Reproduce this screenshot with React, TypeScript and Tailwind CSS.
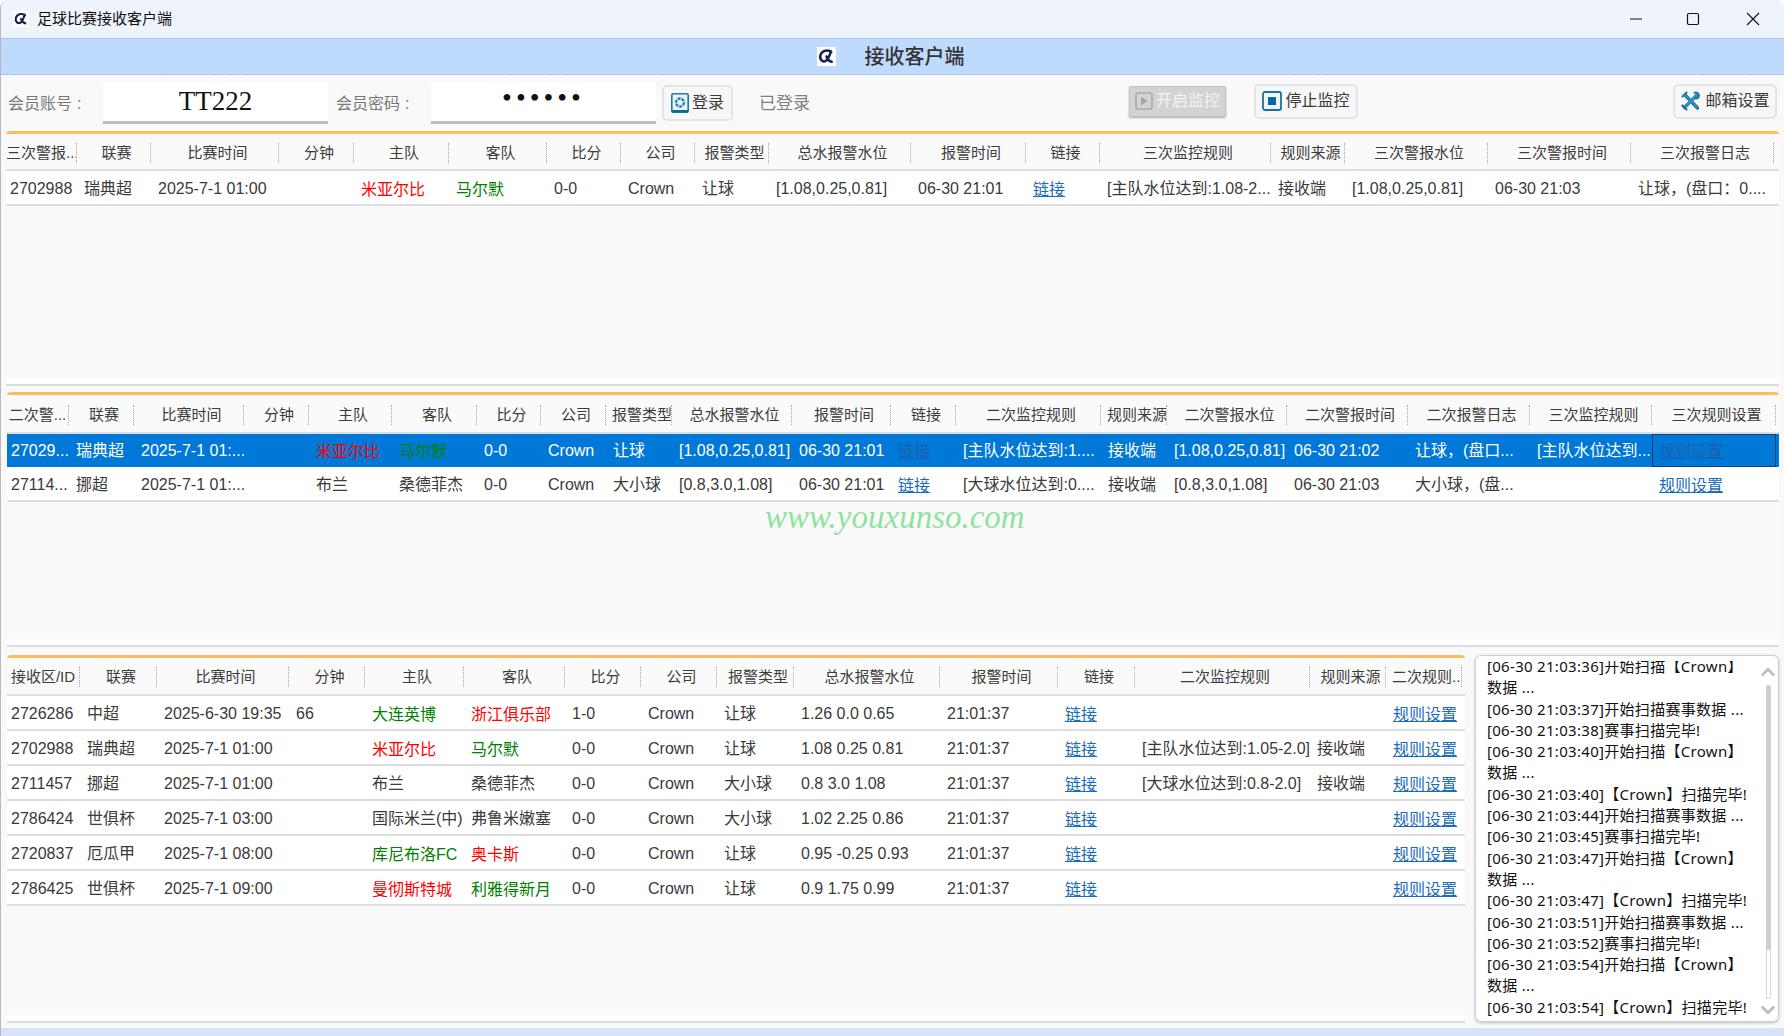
import { ChevronDown, ChevronUp } from "lucide-react";
import { ReactNode } from "react";

type Cell = string | { t: string; c?: "red" | "green" | "link"; wrap?: boolean };

const RED = (t: string, wrap?: boolean): Cell => ({ t, c: "red", wrap });
const GREEN = (t: string): Cell => ({ t, c: "green" });
const LINK = (t: string): Cell => ({ t, c: "link" });

const cols1 = "grid grid-cols-[71px_74px_128px_75px_95px_98px_74px_74px_74px_142px_115px_74px_171px_74px_143px_143px_143px]";
const cols2 = "grid grid-cols-[62px_65px_110px_65px_83px_85px_64px_65px_66px_120px_99px_65px_145px_66px_120px_121px_122px_122px_124px]";
const cols3 = "grid grid-cols-[73px_77px_132px_76px_99px_101px_76px_76px_77px_146px_118px_77px_175px_76px_76px]";

const head1 = ["三次警报...", "联赛", "比赛时间", "分钟", "主队", "客队", "比分", "公司", "报警类型", "总水报警水位", "报警时间", "链接", "三次监控规则", "规则来源", "三次警报水位", "三次警报时间", "三次报警日志"];
const head2 = ["二次警...", "联赛", "比赛时间", "分钟", "主队", "客队", "比分", "公司", "报警类型", "总水报警水位", "报警时间", "链接", "二次监控规则", "规则来源", "二次警报水位", "二次警报时间", "二次报警日志", "三次监控规则", "三次规则设置"];
const head3 = ["接收区/ID", "联赛", "比赛时间", "分钟", "主队", "客队", "比分", "公司", "报警类型", "总水报警水位", "报警时间", "链接", "二次监控规则", "规则来源", "二次规则..."];

const rows1: Cell[][] = [
  ["2702988", "瑞典超", "2025-7-1 01:00", "", RED("米亚尔比"), GREEN("马尔默"), "0-0", "Crown", "让球", "[1.08,0.25,0.81]", "06-30 21:01", LINK("链接"), "[主队水位达到:1.08-2...", "接收端", "[1.08,0.25,0.81]", "06-30 21:03", "让球，(盘口：0...."],
];

const rows2: Cell[][] = [
  ["27029...", "瑞典超", "2025-7-1 01:...", "", RED("米亚尔比"), GREEN("马尔默"), "0-0", "Crown", "让球", "[1.08,0.25,0.81]", "06-30 21:01", LINK("链接"), "[主队水位达到:1....", "接收端", "[1.08,0.25,0.81]", "06-30 21:02", "让球，(盘口...", "[主队水位达到...", LINK("规则设置")],
  ["27114...", "挪超", "2025-7-1 01:...", "", "布兰", "桑德菲杰", "0-0", "Crown", "大小球", "[0.8,3.0,1.08]", "06-30 21:01", LINK("链接"), "[大球水位达到:0....", "接收端", "[0.8,3.0,1.08]", "06-30 21:03", "大小球，(盘...", "", LINK("规则设置")],
];

const rows3: Cell[][] = [
  ["2726286", "中超", "2025-6-30 19:35", "66", GREEN("大连英博"), RED("浙江俱乐部绿城", true), "1-0", "Crown", "让球", "1.26 0.0 0.65", "21:01:37", LINK("链接"), "", "", LINK("规则设置")],
  ["2702988", "瑞典超", "2025-7-1 01:00", "", RED("米亚尔比"), GREEN("马尔默"), "0-0", "Crown", "让球", "1.08 0.25 0.81", "21:01:37", LINK("链接"), "[主队水位达到:1.05-2.0]", "接收端", LINK("规则设置")],
  ["2711457", "挪超", "2025-7-1 01:00", "", "布兰", "桑德菲杰", "0-0", "Crown", "大小球", "0.8 3.0 1.08", "21:01:37", LINK("链接"), "[大球水位达到:0.8-2.0]", "接收端", LINK("规则设置")],
  ["2786424", "世俱杯", "2025-7-1 03:00", "", "国际米兰(中)", "弗鲁米嫩塞", "0-0", "Crown", "大小球", "1.02 2.25 0.86", "21:01:37", LINK("链接"), "", "", LINK("规则设置")],
  ["2720837", "厄瓜甲", "2025-7-1 08:00", "", GREEN("库尼布洛FC"), RED("奥卡斯"), "0-0", "Crown", "让球", "0.95 -0.25 0.93", "21:01:37", LINK("链接"), "", "", LINK("规则设置")],
  ["2786425", "世俱杯", "2025-7-1 09:00", "", RED("曼彻斯特城市", true), GREEN("利雅得新月"), "0-0", "Crown", "让球", "0.9 1.75 0.99", "21:01:37", LINK("链接"), "", "", LINK("规则设置")],
];

const logs = [
  "[06-30 21:03:36]开始扫描【Crown】数据 ...",
  "[06-30 21:03:37]开始扫描赛事数据 ...",
  "[06-30 21:03:38]赛事扫描完毕!",
  "[06-30 21:03:40]开始扫描【Crown】数据 ...",
  "[06-30 21:03:40]【Crown】扫描完毕!",
  "[06-30 21:03:44]开始扫描赛事数据 ...",
  "[06-30 21:03:45]赛事扫描完毕!",
  "[06-30 21:03:47]开始扫描【Crown】数据 ...",
  "[06-30 21:03:47]【Crown】扫描完毕!",
  "[06-30 21:03:51]开始扫描赛事数据 ...",
  "[06-30 21:03:52]赛事扫描完毕!",
  "[06-30 21:03:54]开始扫描【Crown】数据 ...",
  "[06-30 21:03:54]【Crown】扫描完毕!",
];

function Logo({ box }: { box: string }) {
  return (
    <svg className={box} viewBox="0 0 20 20">
      <rect width="20" height="20" fill="#fff" />
      <path d="M15 5.5C12.5 2.5 5 3 3.5 9c-1 4.5 3 7.5 6 5.5 2.5-1.7 4-6 5-10M10 10c.8 2.5 2.5 5 5.5 5.5" fill="none" stroke="#15204f" strokeWidth="2.6" strokeLinecap="round" />
    </svg>
  );
}

function LoginIcon() {
  return (
    <svg className="h-[20px] w-[18px] shrink-0" viewBox="0 0 18 20">
      <rect x="0.8" y="0.8" width="16.4" height="18.4" rx="1.5" fill="#eaf3f8" stroke="#1c7aa6" strokeWidth="1.6" />
      <circle cx="9" cy="9.5" r="4" fill="none" stroke="#1f86b8" strokeWidth="2.4" strokeDasharray="3 1" />
      <rect x="1" y="17" width="16" height="2.4" fill="#156a92" />
    </svg>
  );
}

function StartIcon() {
  return (
    <svg className="h-[18px] w-[18px] shrink-0" viewBox="0 0 18 18">
      <rect x="1" y="1" width="16" height="16" rx="2" fill="#d4d4d4" stroke="#a9a9a9" strokeWidth="1.6" />
      <path d="M6 4.5l6.5 4.5L6 13.5z" fill="#a4a4a4" />
    </svg>
  );
}

function StopIcon() {
  return (
    <svg className="h-[20px] w-[20px] shrink-0" viewBox="0 0 20 20">
      <rect x="1" y="1" width="18" height="18" rx="2" fill="#eef4f8" stroke="#1c6f9e" strokeWidth="1.8" />
      <rect x="6" y="6" width="8" height="8" fill="#0c679c" />
    </svg>
  );
}

function ToolsIcon() {
  return (
    <svg className="h-[22px] w-[22px] shrink-0" viewBox="0 0 22 22" fill="none" strokeLinecap="round">
      <path d="M5 5l12.5 13" stroke="#1c6f9e" strokeWidth="3.4" />
      <path d="M5 5l12.5 13" stroke="#5db3d8" strokeWidth="1" />
      <path d="M2.5 6.5L6.5 2.5" stroke="#1f7fae" strokeWidth="2.2" />
      <path d="M17 5L4.5 17.5" stroke="#2a8fbd" strokeWidth="3.4" />
      <path d="M14.5 2.8c2-1 4.5.6 4.4 3-.1 1.7-1.6 2.8-3 2.8" stroke="#1c6f9e" strokeWidth="2" />
      <path d="M2.5 15.5l4 4" stroke="#1c6f9e" strokeWidth="2.2" />
    </svg>
  );
}

function Btn({ icon, label, box, off }: { icon: ReactNode; label: string; box: string; off?: boolean }) {
  return (
    <div className={`flex items-center justify-center gap-[3px] ${box} ${off ? "rounded-[2px] border border-[#c4c4c4] bg-[#d3d3d3] text-[#f4f4f4] shadow-[0_1px_2px_#aaa]" : "rounded-[5px] border-2 border-[#e4e4e4] bg-[#f7f7f7] text-[#3a3a3a]"}`}>
      {icon}
      <span>{label}</span>
    </div>
  );
}

function Table({ cols, head, rows, selected, headH }: { cols: string; head: string[]; rows: Cell[][]; selected?: number; headH: string }) {
  return (
    <div>
      <div className={`${cols} ${headH} items-center border-b-2 border-[#dedede] bg-[#fafafa] text-[15px] text-[#3c3c3c]`}>
        {head.map((h, i) => (
          <div key={i} className={`mt-[2px] h-[20px] overflow-hidden whitespace-nowrap border-r border-dotted border-[#a8a8a8] text-center leading-[20px] ${i === 0 ? "" : "pl-[6px]"}`}>
            {h}
          </div>
        ))}
      </div>
      {rows.map((row, r) => {
        const sel = r === selected;
        return (
          <div key={r} className={`${cols} ${sel ? "h-[33px] bg-[#0078d7] text-white" : "h-[35px] border-b-2 border-[#dedede] bg-white text-[#3a3a3a]"}`}>
            {row.map((cell, i) => {
              const c = typeof cell === "string" ? { t: cell } as { t: string; c?: string; wrap?: boolean } : cell;
              const tone = c.c === "red" ? "text-[#ff0000]" : c.c === "green" ? "text-[#008000]" : c.c === "link" ? (sel ? "text-[#1a62aa] underline" : "text-[#1a6cb8] underline") : "";
              const top = sel ? (c.c ? "pt-[6px]" : "pt-[5px]") : c.c ? "pt-[7px]" : "pt-[6px]";
              const focus = sel && i === row.length - 1 ? "outline outline-1 -outline-offset-1 outline-[#173f66]" : "";
              return (
                <div key={i} className={`overflow-hidden text-[16px] leading-[23px] ${top} ${i === 0 ? "pl-[4px]" : "pl-[7px]"} ${c.wrap ? "pr-[7px]" : "whitespace-nowrap"} ${tone} ${focus}`}>
                  {c.t}
                </div>
              );
            })}
          </div>
        );
      })}
    </div>
  );
}

function Panel({ box, children }: { box: string; children: ReactNode }) {
  return (
    <div className={`flex flex-col overflow-hidden rounded-t-[4px] border-t-[3px] border-b-2 border-t-[#ffbc5e] border-b-[#dcdcdc] bg-white pb-[6px] ${box}`}>
      <div className="flex-1 bg-[#fafafa]">{children}</div>
    </div>
  );
}

export default function App() {
  return (
    <div className="relative flex h-[1036px] w-[1784px] flex-col overflow-hidden rounded-t-[8px] border-l border-[#b8b8b8] bg-[#f9f9f9] font-['Liberation_Sans','Noto_Sans_CJK_SC',sans-serif]">
      <div className="flex h-[38px] shrink-0 items-center bg-[#eff3fb] pl-[12px] text-[15px] text-[#111]">
        <Logo box="h-[16px] w-[16px]" />
        <span className="ml-[8px]">足球比赛接收客户端</span>
        <div className="ml-auto flex items-center">
          <svg className="mr-[43px] h-[14px] w-[14px]" viewBox="0 0 14 14"><path d="M1 7h12" stroke="#111" strokeWidth="1.1" /></svg>
          <svg className="mr-[46px] h-[14px] w-[14px]" viewBox="0 0 14 14"><rect x="1.5" y="1.5" width="11" height="11" rx="1.5" fill="none" stroke="#111" strokeWidth="1.2" /></svg>
          <svg className="mr-[24px] h-[14px] w-[14px]" viewBox="0 0 14 14"><path d="M1 1l12 12M13 1L1 13" stroke="#111" strokeWidth="1.1" /></svg>
        </div>
      </div>

      <div className="flex h-[37px] shrink-0 items-center justify-center border-y border-dotted border-[#9fb3cc] bg-[#bfdaff] text-[20px] font-medium text-[#333]">
        <Logo box="h-[19px] w-[19px]" />
        <span className="ml-[29px] mr-[4px]">接收客户端</span>
      </div>

      <div className="flex h-[56px] shrink-0 items-center pl-[7px] text-[16px] text-[#777]">
        <span className="w-[95px] pt-[2px]">会员账号<span className="ml-[5px]">:</span></span>
        <div className="h-[41px] w-[225px] border-b-[3px] border-[#bdbdbd] bg-white text-center font-['Liberation_Serif',serif] text-[27px] leading-[36px] text-[#111]">TT222</div>
        <span className="ml-[8px] w-[95px] pt-[2px]">会员密码<span className="ml-[5px]">:</span></span>
        <div className="h-[41px] w-[225px] border-b-[3px] border-[#bdbdbd] bg-white text-center font-['Liberation_Serif',serif] text-[28px] leading-[30px] tracking-[4px] text-[#111]">••••••</div>
        <Btn box="ml-[6px] h-[36px] w-[71px]" icon={<LoginIcon />} label="登录" />
        <span className="ml-[26px] pt-[2px] text-[17px] text-[#808080]">已登录</span>
        <Btn off box="ml-[319px] mb-[4px] h-[31px] w-[97px]" icon={<StartIcon />} label="开启监控" />
        <Btn box="ml-[28px] mb-[4px] h-[35px] w-[104px]" icon={<StopIcon />} label="停止监控" />
        <Btn box="ml-[315px] mb-[4px] h-[35px] w-[104px]" icon={<ToolsIcon />} label="邮箱设置" />
      </div>

      <Panel box="ml-[5px] mr-[5px] h-[255px] shrink-0">
        <Table cols={cols1} head={head1} rows={rows1} headH="h-[37px]" />
      </Panel>

      <Panel box="ml-[6px] mr-[5px] mt-[6px] h-[255px] shrink-0">
        <Table cols={cols2} head={head2} rows={rows2} selected={0} headH="h-[39px]" />
      </Panel>

      <div className="mt-[8px] flex h-[368px] shrink-0 pl-[6px]">
        <Panel box="w-[1458px]">
          <Table cols={cols3} head={head3} rows={rows3} headH="h-[38px]" />
        </Panel>
        <div className="ml-[10px] flex h-[367px] w-[304px] rounded-[6px] border border-[#d0d0d0] bg-white pt-[5px] shadow-[0_1px_3px_#bbb]">
          <div className="flex-1 overflow-hidden pl-[11px] font-['Noto_Sans','Noto_Sans_CJK_SC',sans-serif] text-[15px] leading-[21.3px] tracking-[0.3px] text-[#111]">
            <div className="-mt-[5px]">
              {logs.map((l, i) => (
                <div key={i}>{l}</div>
              ))}
            </div>
          </div>
          <div className="flex w-[20px] shrink-0 flex-col items-center text-[#bdbdbd]">
            <ChevronUp size={22} strokeWidth={3} />
            <div className="mt-[2px] flex w-[5px] flex-1 flex-col justify-end rounded-[2px] bg-[#cfcfcf]">
              <div className="h-[50px] rounded-[2px] border border-[#d8d8d8] bg-white" />
            </div>
            <ChevronDown size={22} strokeWidth={3} />
          </div>
        </div>
      </div>

      <div className="mt-auto h-[8px] shrink-0 bg-[#d6e4f5]" />

      <div className="absolute left-[764px] top-[493px] font-['Liberation_Serif',serif] text-[33px] italic text-[#8fe3a0]">www.youxunso.com</div>
    </div>
  );
}
